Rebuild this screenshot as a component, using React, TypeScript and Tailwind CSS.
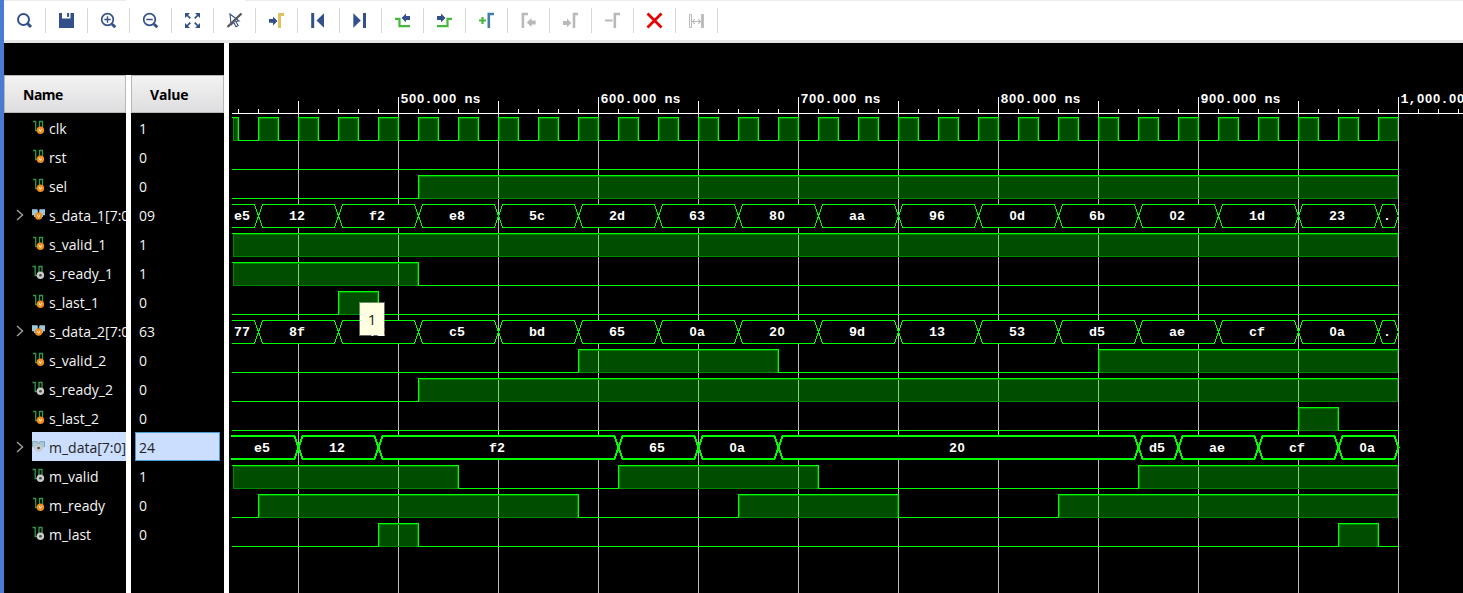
import React from "react";

type Badge = "in" | "out";
type Signal = {
  name: string;
  value: string;
  badge: Badge;
  // Levels alternate at each edge, beginning with `start`.
  start?: 0 | 1;
  edges?: number[];
  bus?: { edges: number[]; labels: string[] };
  selected?: boolean;
};

const X0 = 232;
const X1 = 1398;

const range = (from: number, to: number, step: number) => {
  const out: number[] = [];
  for (let x = from; x <= to; x += step) out.push(x);
  return out;
};

const busEdges = [258, ...range(338, 1378, 80)];

const signals: Signal[] = [
  { name: "clk", value: "1", badge: "in", start: 1, edges: range(238, 1378, 20) },
  { name: "rst", value: "0", badge: "in", start: 0, edges: [] },
  { name: "sel", value: "0", badge: "in", start: 0, edges: [418] },
  {
    name: "s_data_1[7:0]", value: "09", badge: "in",
    bus: { edges: busEdges, labels: ["e5", "12", "f2", "e8", "5c", "2d", "63", "80", "aa", "96", "0d", "6b", "02", "1d", "23", "."] },
  },
  { name: "s_valid_1", value: "1", badge: "in", start: 1, edges: [] },
  { name: "s_ready_1", value: "1", badge: "out", start: 1, edges: [418] },
  { name: "s_last_1", value: "0", badge: "in", start: 0, edges: [338, 378] },
  {
    name: "s_data_2[7:0]", value: "63", badge: "in",
    bus: { edges: busEdges, labels: ["77", "8f", "f2", "c5", "bd", "65", "0a", "20", "9d", "13", "53", "d5", "ae", "cf", "0a", "."] },
  },
  { name: "s_valid_2", value: "0", badge: "in", start: 0, edges: [578, 778, 1098] },
  { name: "s_ready_2", value: "0", badge: "out", start: 0, edges: [418] },
  { name: "s_last_2", value: "0", badge: "in", start: 0, edges: [1298, 1338] },
  {
    name: "m_data[7:0]", value: "24", badge: "out", selected: true,
    bus: { edges: [298, 378, 618, 698, 778, 1138, 1178, 1258, 1338], labels: ["e5", "12", "f2", "65", "0a", "20", "d5", "ae", "cf", "0a"] },
  },
  { name: "m_valid", value: "1", badge: "out", start: 1, edges: [458, 618, 818, 1138] },
  { name: "m_ready", value: "0", badge: "in", start: 0, edges: [258, 578, 738, 898, 1058] },
  { name: "m_last", value: "0", badge: "out", start: 0, edges: [378, 418, 1338, 1378] },
];

// Fixed 8px cells; zeros come from the sans face so that they have no inner dot.
function MonoText({ x, y, text }: { x: number; y: number; text: string }) {
  const xs = text.split("").map((_, i) => x + 4 + i * 8).join(" ");
  return (
    <text
      x={xs}
      y={y}
      textAnchor="middle"
      fill="#fff"
      className="font-['Liberation_Mono',monospace] text-[13.33px] font-bold"
    >
      {text.split(/(0+)/).filter(Boolean).map((part, i) =>
        part[0] === "0" ? (
          <tspan key={i} className="font-['Liberation_Sans',sans-serif] text-[13px]">{part}</tspan>
        ) : (
          <tspan key={i}>{part}</tspan>
        )
      )}
    </text>
  );
}

function LevelWave({ s, top }: { s: Signal; top: number }) {
  const edges = s.edges ?? [];
  const points = [X0, ...edges, X1];
  const bottom = top + 23;
  let level = s.start ?? 0;
  const parts: React.ReactNode[] = [];
  for (let i = 0; i < points.length - 1; i++) {
    const a = points[i];
    const b = points[i + 1];
    if (level) {
      const l = a + 1;
      parts.push(
        <g key={i}>
          <rect x={l} y={top + 1} width={b - l} height={23} fill="#00ff00" fillOpacity={0.3} />
          <rect x={l + 0.5} y={top + 1.5} width={b - l - 1} height={22} fill="none" stroke="#008a00" />
          <rect x={a} y={top} width={b - a + 1} height={1} fill="#00ff00" />
        </g>
      );
    } else {
      parts.push(<rect key={i} x={a} y={bottom} width={b - a + 1} height={1} fill="#00ff00" />);
    }
    if (i > 0) parts.push(<rect key={`e${i}`} x={a} y={top} width={1} height={24} fill="#00ff00" />);
    level = level ? 0 : 1;
  }
  return <g shapeRendering="crispEdges">{parts}</g>;
}

function BusWave({ s, top }: { s: Signal; top: number }) {
  const bus = s.bus!;
  const points = [228, ...bus.edges, X1];
  const w = s.selected ? 2 : 1;
  const off = s.selected ? 0 : 0.5;
  const left = s.selected ? 231 : X0;
  const t = top + off;
  const b = top + 23 + off;
  const mid = (t + b) / 2;
  return (
    <g>
      {bus.labels.map((label, i) => {
        const a = points[i] + 0.5;
        const z = points[i + 1] + 0.5;
        const d =
          i === 0
            ? `M${left} ${t}H${z - 4}L${z} ${mid}L${z - 4} ${b}H${left}`
            : `M${a} ${mid}L${a + 4} ${t}H${z - 4}L${z} ${mid}L${z - 4} ${b}H${a + 4}Z`;
        return (
          <g key={i}>
            <path d={d} fill="#000" stroke="#00ff00" strokeWidth={w} shapeRendering="crispEdges" />
            <MonoText x={(points[i] + points[i + 1]) / 2 - 1 - label.length * 4} y={top + 16} text={label} />
          </g>
        );
      })}
    </g>
  );
}

function Waves() {
  return (
    <svg width="1234" height="550" viewBox="229 43 1234 550" className="block shrink-0">
      <g shapeRendering="crispEdges">
        {range(298, 1398, 100).map((x) => (
          <rect key={x} x={x} y={114} width={1} height={479} fill="#c0c0c0" />
        ))}
        <rect x={232} y={113} width={1231} height={1} fill="#fff" />
        {range(238, 1458, 20).map((x) => (
          <rect key={x} x={x} y={109} width={1} height={4} fill="#fff" />
        ))}
        {range(298, 1298, 200).map((x) => (
          <rect key={x} x={x} y={101} width={1} height={12} fill="#fff" />
        ))}
        {range(398, 1398, 200).map((x) => (
          <rect key={x} x={x} y={97} width={1} height={16} fill="#fff" />
        ))}
      </g>
      {[500, 600, 700, 800, 900].map((n, i) => (
        <MonoText key={n} x={400.5 + i * 200} y={103} text={`${n}.000 ns`} />
      ))}
      <MonoText x={1400.5} y={103} text="1,000.000 ns" />
      {signals.map((s, i) =>
        s.bus ? <BusWave key={s.name} s={s} top={117 + i * 29} /> : <LevelWave key={s.name} s={s} top={117 + i * 29} />
      )}
    </svg>
  );
}

function BadgeDot({ kind, cx, cy }: { kind: Badge; cx: number; cy: number }) {
  return kind === "in" ? (
    <>
      <circle cx={cx} cy={cy} r="3.7" fill="#f28c1c" />
      <path d={`M${cx - 1.3} ${cy - 1.3}L${cx} ${cy + 1.5}L${cx + 1.3} ${cy - 1.3}`} fill="none" stroke="#fff3e0" strokeWidth="0.9" />
    </>
  ) : (
    <>
      <circle cx={cx} cy={cy} r="3.7" fill="#c9c9c9" />
      <circle cx={cx} cy={cy} r="1.3" fill="#444" />
    </>
  );
}

function SignalIcon({ s }: { s: Signal }) {
  if (s.bus) {
    return (
      <svg width="14" height="15" viewBox="0 0 14 15" className="block shrink-0">
        <path d="M0 2.2H5.4L6 4.5L4 10H2V8.2H0Z" fill={s.selected ? "#a3c9da" : "#9cc6dc"} />
        <path d="M13 2.2H7.6L7 4.5L9 10H11V8.2H13Z" fill={s.selected ? "#a3c9da" : "#9cc6dc"} />
        {s.selected && <path d="M.5 8V2.7H5.3L6.5 5.2L7.7 2.7H12.5V8" fill="none" stroke="#8399a8" strokeWidth=".8" />}
        <BadgeDot kind={s.badge} cx={6.6} cy={9} />
      </svg>
    );
  }
  const dx = s.badge === "in" ? 0.5 : 0;
  return (
    <svg width="14" height="15" viewBox={s.badge === "in" ? "-0.5 0 14 15" : "0 0 14 15"} className="block shrink-0">
      <path d="M.5 1.5H3.2V10.5H5.5" fill="none" stroke="#2f9a4c" strokeWidth="1.3" />
      <path d="M7 9V1.5H10V8" fill="none" stroke="#2f9a4c" strokeWidth="1.3" />
      <BadgeDot kind={s.badge} cx={8.4 - dx} cy={10.2} />
    </svg>
  );
}

const NAVY = "#33508a";
const GREY = "#b9b9b9";

const toolIcons: { key: string; art: React.ReactNode }[] = [
  {
    key: "search",
    art: (
      <g fill="none" stroke={NAVY}>
        <circle cx="7" cy="7" r="5.5" strokeWidth="2" />
        <path d="M11 11L14.5 14.5" strokeWidth="3" />
      </g>
    ),
  },
  {
    key: "save",
    art: (
      <>
        <path d="M.5 .5H15.5V15.5H.5Z" fill={NAVY} />
        <path d="M3.5 .5H12V6H3.5Z" fill="#fff" />
        <path d="M8.6 .5H10.6V4.4H8.6Z" fill={NAVY} />
      </>
    ),
  },
  {
    key: "zoom-in",
    art: (
      <g fill="none" stroke={NAVY}>
        <circle cx="7" cy="7" r="5.8" strokeWidth="1.7" />
        <path d="M3.8 7H10.2M7 3.8V10.2" strokeWidth="1.4" />
        <path d="M11.4 11.4L14.8 14.8" strokeWidth="2.8" />
      </g>
    ),
  },
  {
    key: "zoom-out",
    art: (
      <g fill="none" stroke={NAVY}>
        <circle cx="7" cy="7" r="5.8" strokeWidth="1.7" />
        <path d="M3.8 7H10.2" strokeWidth="1.5" />
        <path d="M11.4 11.4L14.8 14.8" strokeWidth="2.8" />
      </g>
    ),
  },
  {
    key: "fit",
    art: (
      <>
        <path d="M.5 .5H5.5L.5 5.5ZM15.5 .5V5.5L10.5 .5ZM.5 15.5V10.5L5.5 15.5ZM15.5 15.5H10.5L15.5 10.5Z" fill={NAVY} />
        <path d="M2 2L5.8 5.8M14 2L10.2 5.8M2 14L5.8 10.2M14 14L10.2 10.2" stroke={NAVY} strokeWidth="1.7" />
      </>
    ),
  },
  {
    key: "no-cursor",
    art: (
      <>
        <path d="M3.5 1.5L12.5 8.5L9.2 9L11.7 13L9.5 14.2L7.3 10L4.6 12.4Z" fill="#fff" stroke={NAVY} strokeWidth="1.1" />
        <path d="M1 14.5L15 1" stroke="#585858" strokeWidth="2.4" />
      </>
    ),
  },
  {
    key: "goto-cursor",
    art: (
      <>
        <path d="M.5 6.5H4.5V4L9 8.5L4.5 13V10.3H.5Z" fill={NAVY} />
        <path d="M11 15.5V2H15.5" fill="none" stroke="#dfc25f" strokeWidth="3" />
      </>
    ),
  },
  {
    key: "first",
    art: (
      <>
        <path d="M2.2 .5V15.5" stroke={NAVY} strokeWidth="3" />
        <path d="M13.5 .8V15.2L6 8Z" fill={NAVY} />
      </>
    ),
  },
  {
    key: "last",
    art: (
      <>
        <path d="M12 .5V15.5" stroke={NAVY} strokeWidth="3" />
        <path d="M.8 .8V15.2L8.3 8Z" fill={NAVY} />
      </>
    ),
  },
  {
    key: "prev-edge",
    art: (
      <>
        <path d="M.5 6.4H5V13.6H15.5" fill="none" stroke="#45b83d" strokeWidth="2.2" />
        <path d="M15.5 3.4V7.4H11.5V9.8L7 5.4L11.5 1V3.4Z" fill={NAVY} />
      </>
    ),
  },
  {
    key: "next-edge",
    art: (
      <>
        <path d="M.5 13.6H11V6.4H15.5" fill="none" stroke="#45b83d" strokeWidth="2.2" />
        <path d="M.5 3.4V7.4H4.5V9.8L9 5.4L4.5 1V3.4Z" fill={NAVY} />
      </>
    ),
  },
  {
    key: "add-marker",
    art: (
      <>
        <path d="M.5 8H7.5M4 4.5V11.5" stroke="#45b83d" strokeWidth="2.2" />
        <path d="M10.3 15.5V1.5H15.5" fill="none" stroke="#3f7fae" strokeWidth="2.6" />
      </>
    ),
  },
  {
    key: "prev-marker",
    art: (
      <>
        <path d="M2.4 15.5V1.5H7.5" fill="none" stroke={GREY} strokeWidth="2.6" />
        <path d="M15.2 8V12H11V14.5L6.2 10L11 5.5V8Z" fill={GREY} />
      </>
    ),
  },
  {
    key: "next-marker",
    art: (
      <>
        <path d="M11.5 15.5V1.5H15.5" fill="none" stroke={GREY} strokeWidth="2.6" />
        <path d="M.5 8.5V12.4H4.5V14.7L8.8 10.4L4.5 6.1V8.5Z" fill={GREY} />
      </>
    ),
  },
  {
    key: "remove-marker",
    art: (
      <>
        <path d="M.5 8H8" stroke={GREY} strokeWidth="2" />
        <path d="M10.3 15.5V1.5H15.5" fill="none" stroke={GREY} strokeWidth="2.6" />
      </>
    ),
  },
  { key: "delete", art: <path d="M1 1L15 15M15 1L1 15" stroke="#e60000" strokeWidth="2.8" /> },
  {
    key: "swap",
    art: (
      <g fill="none" stroke={GREY}>
        <path d="M1 2H3V15H1Z" strokeWidth="1" />
        <path d="M14 1.5V15.5" strokeWidth="2.8" />
        <path d="M4 9H12M6.3 6.7L4 9L6.3 11.3M9.7 6.7L12 9L9.7 11.3" strokeWidth="1.1" />
      </g>
    ),
  },
];

function Toolbar() {
  return (
    <div className="flex h-[43px] shrink-0 border-b-[3px] border-[#e6e6e6] bg-white">
      <div className="flex flex-1 flex-col">
        <div className="flex h-px">
          <div className="w-[122px] bg-[#ececec]" />
          <div className="w-[119px]" />
          <div className="flex-1 bg-[#ececec]" />
        </div>
        <div className="flex pt-[7px]">
          {toolIcons.map((t) => (
            <div key={t.key} className="flex h-[25px] w-[42px] items-center border-r border-[#d6d6d6] pl-[13px]">
              <svg width="15" height="15" viewBox="0.5 0.5 15 15" className="block overflow-visible">
                {t.art}
              </svg>
            </div>
          ))}
        </div>
      </div>
    </div>
  );
}

export default function App() {
  return (
    <div className="flex h-[593px] w-[1463px] overflow-hidden bg-black font-['Open_Sans','Noto_Sans',sans-serif]">
      <div className="w-1 shrink-0 bg-[#4a7bd0]" />
      <div className="flex min-w-0 flex-1 flex-col">
        <Toolbar />
        <div className="flex min-h-0 flex-1">
          <div className="flex w-[220px] shrink-0 flex-col pt-8">
            <div className="flex flex-1">
              <div className="flex w-[122px] flex-col overflow-hidden">
                <div className="flex h-[38px] shrink-0 items-center border border-[#b8b8b8] bg-linear-to-b from-[#f3f3f3] to-[#dedee0] pl-[18px] text-[14px] font-bold tracking-[-0.5px] text-black">
                  Name
                </div>
                {signals.map((s) => (
                  <div key={s.name} className="flex h-[29px] shrink-0 items-center">
                    <div className="flex w-7 shrink-0 justify-end pr-2">
                      {s.bus && (
                        <svg width="8" height="12" viewBox="0 0 8 12" className="block">
                          <path d="M1 1L6.5 6L1 11" fill="none" stroke="#9a9a9a" strokeWidth="1.5" />
                        </svg>
                      )}
                    </div>
                    <div
                      className={
                        s.selected
                          ? "flex h-full flex-1 items-center bg-[#cbdefe] text-[#222]"
                          : "flex h-full flex-1 items-center text-[#f4f4f4]"
                      }
                    >
                      <SignalIcon s={s} />
                      <span className="pl-[3px] pt-[2px] text-[14px] leading-[20px] whitespace-nowrap">{s.name}</span>
                    </div>
                  </div>
                ))}
              </div>
              <div className="w-[5px] shrink-0 bg-white" />
              <div className="flex w-[93px] flex-col">
                <div className="flex h-[38px] shrink-0 items-center border border-[#b8b8b8] bg-linear-to-b from-[#f3f3f3] to-[#dedee0] pl-[18px] text-[14px] font-bold tracking-[-0.2px] text-black">
                  Value
                </div>
                {signals.map((s) => (
                  <div key={s.name} className="flex h-[29px] shrink-0 px-1">
                    <div
                      className={
                        s.selected
                          ? "flex flex-1 items-center border border-[#4a9ad6] bg-[#cbdefe] pl-[3px] pt-[2px] text-[14px] text-[#222]"
                          : "flex flex-1 items-center pl-[4px] pt-[2px] text-[14px] text-[#f4f4f4]"
                      }
                    >
                      {s.value}
                    </div>
                  </div>
                ))}
              </div>
            </div>
          </div>
          <div className="w-[5px] shrink-0 bg-white" />
          <div className="relative flex-1">
            <Waves />
            <div className="absolute left-[130px] top-[259px] flex h-[34px] w-[26px] items-center justify-center border border-white/40 bg-[#ffffe1] bg-clip-padding text-[15px] text-[#222]">
              1
            </div>
          </div>
        </div>
      </div>
    </div>
  );
}
